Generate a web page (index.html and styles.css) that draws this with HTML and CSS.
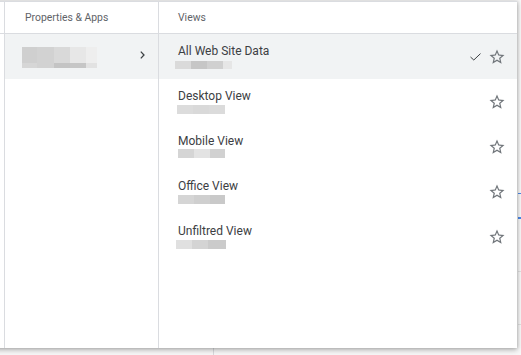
FILE: index.html
```html
<!DOCTYPE html>
<html>
<head>
<meta charset="utf-8">
<link rel="stylesheet" href="styles.css">
</head>
<body>
<div class="page"></div>
<div class="panel">
  <div class="col stub">
    <div class="head"></div>
  </div>
  <div class="col left">
    <div class="head"><span class="head-text">Properties &amp; Apps</span></div>
    <div class="prop selected">
      <div class="blur-prop">
        <div class="bl-row top">
          <span class="c1"></span><span class="c2"></span><span class="c3"></span><span class="c4"></span><span class="c5"></span>
        </div>
        <div class="bl-row bottom">
          <span class="c1"></span><span class="c2"></span><span class="c3"></span><span class="c4"></span><span class="c5"></span>
        </div>
      </div>
      <svg class="chev" width="5" height="8" viewBox="0 0 5 8"><polyline points="0.8,0.6 4,4 0.8,7.4" fill="none" stroke="#3c4043" stroke-width="1.3"/></svg>
    </div>
  </div>
  <div class="col right">
    <div class="head"><span class="head-text">Views</span></div>

    <div class="view selected">
      <div class="info">
        <div class="label">All Web Site Data</div>
        <div class="sub sub1"><span class="g1"></span><span class="g2"></span><span class="g3"></span><span class="g4"></span></div>
      </div>
      <div class="actions">
        <svg class="check" width="11" height="8" viewBox="0 0 11 8"><polyline points="0.5,4 3.8,7 10.5,0.6" fill="none" stroke="#3c4043" stroke-width="1"/></svg>
        <svg class="star" width="18" height="18" viewBox="0 0 24 24"><path d="M22 9.24l-7.19-.62L12 2 9.19 8.63 2 9.24l5.46 4.73L5.82 21 12 17.270 18.18 21l-1.63-7.03L22 9.24zM12 15.4l-3.76 2.27 1-4.28-3.32-2.88 4.38-.38L12 6.1l1.71 4.04 4.38.38-3.32 2.88 1 4.28L12 15.4z"/></svg>
      </div>
    </div>

    <div class="view">
      <div class="info">
        <div class="label">Desktop View</div>
        <div class="sub sub2"><span class="g1"></span><span class="g2"></span><span class="g3"></span></div>
      </div>
      <div class="actions">
        <svg class="star" width="18" height="18" viewBox="0 0 24 24"><path d="M22 9.24l-7.19-.62L12 2 9.19 8.63 2 9.24l5.46 4.73L5.82 21 12 17.27 18.18 21l-1.63-7.03L22 9.24zM12 15.4l-3.76 2.27 1-4.28-3.32-2.88 4.38-.38L12 6.1l1.71 4.04 4.38.38-3.32 2.88 1 4.28L12 15.4z"/></svg>
      </div>
    </div>

    <div class="view">
      <div class="info">
        <div class="label">Mobile View</div>
        <div class="sub sub3"><span class="g1"></span><span class="g2"></span><span class="g3"></span></div>
      </div>
      <div class="actions">
        <svg class="star" width="18" height="18" viewBox="0 0 24 24"><path d="M22 9.24l-7.19-.62L12 2 9.19 8.63 2 9.24l5.46 4.73L5.82 21 12 17.27 18.18 21l-1.63-7.03L22 9.24zM12 15.4l-3.76 2.27 1-4.28-3.32-2.88 4.38-.38L12 6.1l1.71 4.04 4.38.38-3.32 2.88 1 4.28L12 15.4z"/></svg>
      </div>
    </div>

    <div class="view">
      <div class="info">
        <div class="label">Office View</div>
        <div class="sub sub4"><span class="g1"></span><span class="g2"></span><span class="g3"></span></div>
      </div>
      <div class="actions">
        <svg class="star" width="18" height="18" viewBox="0 0 24 24"><path d="M22 9.24l-7.19-.62L12 2 9.19 8.63 2 9.24l5.46 4.73L5.82 21 12 17.27 18.18 21l-1.63-7.03L22 9.24zM12 15.4l-3.76 2.27 1-4.28-3.32-2.88 4.38-.38L12 6.1l1.71 4.04 4.38.38-3.32 2.88 1 4.28L12 15.4z"/></svg>
      </div>
    </div>

    <div class="view">
      <div class="info">
        <div class="label">Unfiltred View</div>
        <div class="sub sub5"><span class="g1"></span><span class="g2"></span><span class="g3"></span></div>
      </div>
      <div class="actions">
        <svg class="star" width="18" height="18" viewBox="0 0 24 24"><path d="M22 9.24l-7.19-.62L12 2 9.19 8.63 2 9.24l5.46 4.73L5.82 21 12 17.27 18.18 21l-1.63-7.03L22 9.24zM12 15.4l-3.76 2.27 1-4.28-3.32-2.88 4.38-.38L12 6.1l1.71 4.04 4.38.38-3.32 2.88 1 4.28L12 15.4z"/></svg>
      </div>
    </div>
  </div>
</div>
</body>
</html>
```

FILE: styles.css
```css
html, body {
  margin: 0;
  padding: 0;
  width: 521px;
  height: 355px;
  overflow: hidden;
  background: #ffffff;
  font-family: Roboto, "Liberation Sans", sans-serif;
}

.page {
  width: 521px;
  height: 355px;
  background-color: #f7f7f7;
  background-image:
    linear-gradient(#d8dadd, #d8dadd),
    linear-gradient(#4a86e8, #4a86e8),
    linear-gradient(#4a86e8, #4a86e8),
    linear-gradient(#e0e0e0, #e0e0e0),
    linear-gradient(#e0e0e0, #e0e0e0);
  background-size: 1px 20px, 4px 1px, 4px 2px, 4px 1px, 4px 1px;
  background-position: 213px 348px, 518px 193px, 518px 217px, 518px 271px, 518px 324px;
  background-repeat: no-repeat;
}

.panel {
  position: absolute;
  left: -10px;
  top: 1px;
  width: 527px;
  height: 347px;
  box-sizing: border-box;
  border-top: 1px solid #dadce0;
  background: #ffffff;
  display: flex;
  box-shadow: 0 2px 5px rgba(0, 0, 0, 0.28), 1px 0 3px rgba(0, 0, 0, 0.12);
}

.col {
  display: flex;
  flex-direction: column;
}

.stub {
  width: 14px;
}

.left {
  width: 155px;
  box-sizing: border-box;
  border-left: 1px solid #dadce0;
  border-right: 1px solid #dadce0;
}

.right {
  flex: 1;
}

.head {
  height: 31px;
  border-bottom: 1px solid #dadce0;
  display: flex;
  align-items: center;
  flex-shrink: 0;
}

.head-text {
  font-size: 10.4px;
  color: #5f6368;
  letter-spacing: 0;
}

.left .head-text {
  padding-left: 20px;
}

.right .head-text {
  padding-left: 19px;
}

.selected {
  background: #f1f3f4;
}

/* left property item */
.prop {
  height: 45px;
  display: flex;
  align-items: flex-start;
  padding-left: 17px;
}

.blur-prop {
  margin-top: 13px;
  display: flex;
  flex-direction: column;
}

.bl-row {
  display: flex;
}

.bl-row.top { height: 16px; }
.bl-row.bottom { height: 5px; }

.bl-row span { display: block; }
.bl-row .c1 { width: 15px; }
.bl-row .c2 { width: 17px; }
.bl-row .c3 { width: 16px; }
.bl-row .c4 { width: 16px; }
.bl-row .c5 { width: 11px; }

.bl-row.top .c1 { background: #cfcfcf; }
.bl-row.top .c2 { background: #d2d2d2; }
.bl-row.top .c3 { background: #d9d9d9; }
.bl-row.top .c4 { background: #e7e7e7; }
.bl-row.top .c5 { background: #eeeeee; }

.bl-row.bottom .c1 { background: #d6d6d6; }
.bl-row.bottom .c2 { background: #d2d2d2; }
.bl-row.bottom .c3 { background: #c4c4c4; }
.bl-row.bottom .c4 { background: #c6c6c6; }
.bl-row.bottom .c5 { background: #e2e2e2; }

.chev {
  margin-left: 43px;
  margin-top: 17px;
}

/* views */
.view {
  height: 45px;
  display: flex;
  align-items: flex-start;
  padding-left: 19px;
  padding-right: 11px;
  flex-shrink: 0;
}

.info {
  flex: 1;
  padding-top: 9px;
}

.label {
  font-size: 12px;
  line-height: 16px;
  color: #3c4043;
  white-space: nowrap;
}

.sub {
  display: flex;
  height: 9px;
  margin-top: 1px;
}

.sub span { display: block; height: 100%; }

.sub1 { margin-top: 2px; height: 8px; margin-left: -3px; }
.sub1 .g1 { width: 16px; background: #dadada; }
.sub1 .g2 { width: 16px; background: #c6c6c6; }
.sub1 .g3 { width: 16px; background: #d0d0d0; }
.sub1 .g4 { width: 9px; background: #e6e6e6; }

.sub2 { margin-left: -1px; }
.sub2 .g1 { width: 16px; background: #dcdcdc; }
.sub2 .g2 { width: 16px; background: #d9d9d9; }
.sub2 .g3 { width: 16px; background: #dbdbdb; }

.sub3 { margin-top: 0; }
.sub3 .g1 { width: 16px; background: #d5d5d5; }
.sub3 .g2 { width: 16px; background: #e3e3e3; }
.sub3 .g3 { width: 15px; background: #d1d1d1; }

.sub4 .g1 { width: 16px; background: #d5d5d5; }
.sub4 .g2 { width: 16px; background: #cfcfcf; }
.sub4 .g3 { width: 15px; background: #c9c9c9; }

.sub5 { margin-left: -2px; }
.sub5 .g1 { width: 16px; background: #e0e0e0; }
.sub5 .g2 { width: 16px; background: #d4d4d4; }
.sub5 .g3 { width: 18px; background: #cbcbcb; }

.actions {
  height: 45px;
  display: flex;
  align-items: center;
  gap: 7px;
}

.check {
  display: block;
}

.star {
  display: block;
  fill: #70757a;
}
```
